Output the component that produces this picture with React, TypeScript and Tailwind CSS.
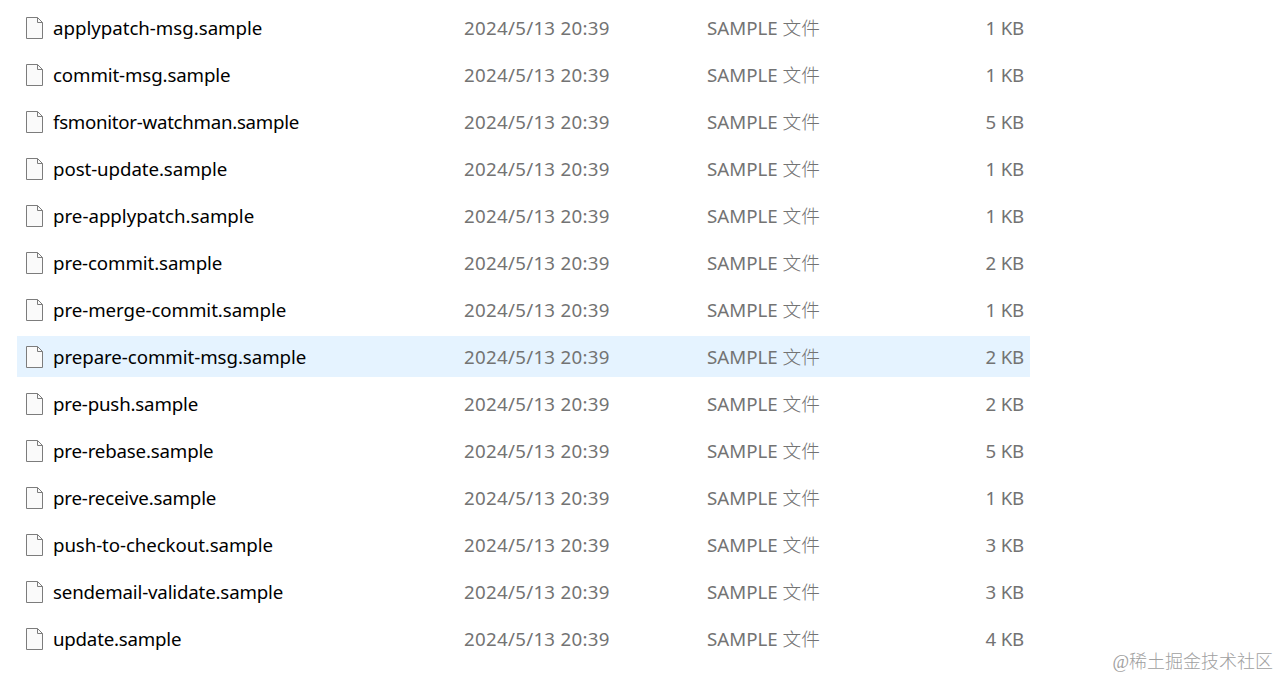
const files = [
  { name: "applypatch-msg.sample", tracking: "tracking-[-0.02px]", size: "1 KB" },
  { name: "commit-msg.sample", tracking: "tracking-[-0.12px]", size: "1 KB" },
  { name: "fsmonitor-watchman.sample", tracking: "tracking-[-0.28px]", size: "5 KB" },
  { name: "post-update.sample", tracking: "tracking-[-0.08px]", size: "1 KB" },
  { name: "pre-applypatch.sample", tracking: "tracking-normal", size: "1 KB" },
  { name: "pre-commit.sample", tracking: "tracking-[-0.1px]", size: "2 KB" },
  { name: "pre-merge-commit.sample", tracking: "tracking-[-0.06px]", size: "1 KB" },
  { name: "prepare-commit-msg.sample", tracking: "tracking-[-0.06px]", size: "2 KB" },
  { name: "pre-push.sample", tracking: "tracking-[-0.18px]", size: "2 KB" },
  { name: "pre-rebase.sample", tracking: "tracking-[-0.18px]", size: "5 KB" },
  { name: "pre-receive.sample", tracking: "tracking-[-0.18px]", size: "1 KB" },
  { name: "push-to-checkout.sample", tracking: "tracking-[-0.09px]", size: "3 KB" },
  { name: "sendemail-validate.sample", tracking: "tracking-[-0.17px]", size: "3 KB" },
  { name: "update.sample", tracking: "tracking-[-0.22px]", size: "4 KB" },
];

function FileIcon() {
  return (
    <svg width="17" height="22" viewBox="0 0 17 22" fill="none" className="shrink-0">
      <path d="M.5.5h11l5 5v16H.5z" fill="#fafafa" stroke="#7c7c7c" />
      <path d="M11.5.5v5h5" stroke="#7c7c7c" />
    </svg>
  );
}

export default function App() {
  return (
    <main className="flex h-[678px] w-[1279px] items-start justify-between overflow-hidden bg-white pl-[17px] font-['Noto_Sans','Noto_Sans_CJK_SC',sans-serif] text-[18.7px] leading-7">
      <ul className="flex w-[1013px] flex-col gap-1.5 pt-[7px]">
        {files.map((file) => (
          <li
            key={file.name}
            className={`flex h-[41px] items-center whitespace-nowrap pt-px pl-[9px] pr-1.5 text-[#737373] ${
              file.name === "prepare-commit-msg.sample" ? "bg-[#e5f3ff]" : ""
            }`}
          >
            <FileIcon />
            <span className={`ml-2.5 w-[411px] text-black ${file.tracking}`}>{file.name}</span>
            <span className="w-[243px] tracking-[0.29px]">2024/5/13 20:39</span>
            <span>
              SAMPLE <span className="font-light">文件</span>
            </span>
            <span className="ml-auto tracking-[-0.2px]">{file.size}</span>
          </li>
        ))}
      </ul>
      <span className="self-end whitespace-nowrap pr-1.5 pb-0.5 font-['Liberation_Serif','Noto_Sans_CJK_SC',serif] text-lg font-light text-[#a0a0a0]">
        @稀土掘金技术社区
      </span>
    </main>
  );
}
